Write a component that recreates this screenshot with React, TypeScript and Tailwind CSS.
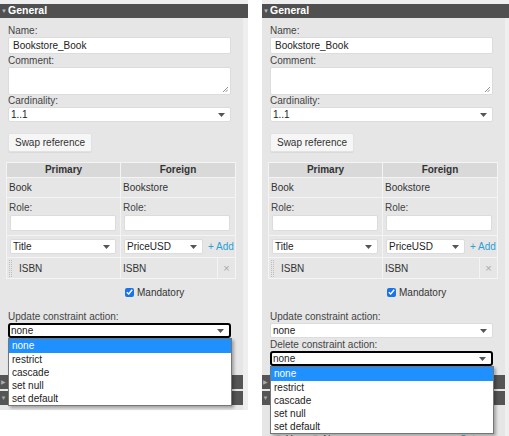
import clsx from 'clsx';

const OPTIONS = ['none', 'restrict', 'cascade', 'set null', 'set default'];

const Arrow = () => (
  <svg width="7" height="4" viewBox="0 0 7 4" className="shrink-0">
    <path d="M0 0h7L3.5 4z" fill="#555" />
  </svg>
);

const Select = ({ value, focused, className }: { value: string; focused?: boolean; className?: string }) => (
  <div
    className={clsx(
      'flex h-[15px] items-center justify-between bg-white pr-[5px]',
      focused ? 'rounded-[3px] border-2 border-black pl-[1px]' : 'rounded-[2px] border border-[#dcdcdc] pl-[2px]',
      className
    )}
  >
    <span className="leading-none text-[#222]">{value}</span>
    <Arrow />
  </div>
);

const Dropdown = () => (
  <div className="absolute left-0 top-full z-10 w-[224px] border border-[#767676] bg-white shadow-[2px_2px_3px_rgba(0,0,0,0.3)]">
    {OPTIONS.map((o, i) => (
      <div
        key={o}
        className={clsx(
          'pl-[3px]',
          i === 0 ? 'h-[14px] bg-[#1e90ff] leading-[14px] text-white' : 'h-[13px] leading-[13px] text-[#222]'
        )}
      >
        {o}
      </div>
    ))}
  </div>
);

const Label = ({ children, className }: { children: string; className?: string }) => (
  <div className={clsx('h-[12px] leading-[12px] text-[#444]', className)}>{children}</div>
);

const Bar = ({ open }: { open?: boolean }) => (
  <div className="flex h-[14px] items-center bg-[#555]">
    <span className="w-[7px] text-center text-[6px] text-[#aaa]">{open ? '▼' : '▶'}</span>
  </div>
);

const Panel = ({ open, tail }: { open: 'update' | 'delete'; tail?: boolean }) => (
  <div className="flex w-[248px] shrink-0 flex-col">
    <div className="h-[4px] bg-[#efefef]" />
    <div className="flex h-[14px] items-center bg-[#505050] text-[10.5px] font-bold text-white">
      <span className="w-[8px] text-center text-[6px] text-[#bbb]">▼</span>
      General
    </div>
    <div className="flex">
      <div className="w-[243px] bg-[#e6e6e6] pb-[5px]">
        <div className="px-[8px] pt-[7px]">
          <Label>Name:</Label>
          <div className="flex h-[17px] w-[223px] items-center rounded-[2px] border border-[#dcdcdc] bg-white pl-[4px] text-[#222]">
            Bookstore_Book
          </div>
          <Label className="mt-px">Comment:</Label>
          <div className="relative h-[28px] w-[223px] rounded-[2px] border border-[#dcdcdc] bg-white">
            <svg width="6" height="6" viewBox="0 0 6 6" className="absolute bottom-[2px] right-[2px]">
              <path d="M1 6L6 1M3.5 6L6 3.5" stroke="#777" strokeWidth="0.8" />
            </svg>
          </div>
          <Label>Cardinality:</Label>
          <Select value="1..1" className="w-[223px]" />

          <button className="mt-[11px] h-[19px] w-[84px] rounded-[2px] border border-[#e2e2e2] bg-[#f6f6f6] text-[10px] text-[#333] shadow-[0_1px_1px_rgba(0,0,0,0.06)]">
            Swap reference
          </button>

          <div className="-ml-[2px] mt-[10px] grid w-[230px] grid-cols-[113px_96px_17px] gap-px bg-[#f4f4f4] p-px text-[#333]">
            <div className="h-[14px] bg-[#d9d9d9] text-center font-bold leading-[14px]">Primary</div>
            <div className="col-span-2 h-[14px] bg-[#d9d9d9] text-center font-bold leading-[14px]">Foreign</div>

            <div className="flex h-[19px] items-center bg-[#e6e6e6] pl-[2px]">Book</div>
            <div className="col-span-2 flex h-[19px] items-center bg-[#e6e6e6] pl-[2px]">Bookstore</div>

            <div className="h-[37px] bg-[#e6e6e6] pl-[2px] pr-[4px] pt-[4px]">
              <Label>Role:</Label>
              <div className="ml-px mt-px h-[16px] rounded-[2px] border border-[#dcdcdc] bg-white" />
            </div>
            <div className="col-span-2 h-[37px] bg-[#e6e6e6] pl-[2px] pr-[5px] pt-[4px]">
              <Label>Role:</Label>
              <div className="ml-px mt-px h-[16px] rounded-[2px] border border-[#dcdcdc] bg-white" />
            </div>

            <div className="flex h-[21px] items-center bg-[#e6e6e6] pl-[3px] pr-[4px]">
              <Select value="Title" className="w-full" />
            </div>
            <div className="col-span-2 flex h-[21px] items-center bg-[#e6e6e6] pl-[3px]">
              <Select value="PriceUSD" className="w-[79px]" />
              <span className="ml-[5px] text-[#2a9fd6]">+ Add</span>
            </div>

            <div className="flex h-[20px] items-center bg-[#e6e6e6] pl-[2px]">
              <span className="flex h-[17px] gap-[1px]">
                <span className="h-full border-l border-dotted border-[#bdbdbd]" />
                <span className="h-full border-l border-dotted border-[#bdbdbd]" />
              </span>
              <span className="ml-[7px]">ISBN</span>
            </div>
            <div className="flex h-[20px] items-center bg-[#e6e6e6] pl-[2px]">ISBN</div>
            <div className="flex h-[20px] items-center justify-center bg-[#e6e6e6] text-[11px] text-[#aaa]">×</div>
          </div>

          <div className="mt-[7px] flex h-[12px] items-center pl-[117px] text-[#333]">
            <span className="flex h-[9px] w-[9px] items-center justify-center rounded-[2px] bg-[#1a73e8]">
              <svg width="7" height="6" viewBox="0 0 7 6">
                <path d="M0.8 3.2L2.7 5L6.2 0.8" stroke="white" strokeWidth="1.4" fill="none" />
              </svg>
            </span>
            <span className="ml-[3px]">Mandatory</span>
          </div>

          <Label className="mt-[13px]">Update constraint action:</Label>
          <div className="relative w-[223px]">
            <Select value="none" focused={open === 'update'} />
            {open === 'update' && <Dropdown />}
          </div>
          <Label className="mt-px">Delete constraint action:</Label>
          <div className="relative w-[223px]">
            <Select value="none" focused={open === 'delete'} />
            {open === 'delete' && <Dropdown />}
          </div>
        </div>

        <div className="mt-[9px] flex flex-col gap-[2px]">
          <Bar />
          <Bar open />
        </div>

        {tail && (
          <div className="mt-[27px] flex h-[14px] items-center px-[12px] text-[#555]">
            <span className="h-[9px] w-[9px] rounded-full border border-[#bbb] bg-[#f3f3f3]" />
            <span className="ml-[3px]">Yes</span>
            <span className="ml-[9px] h-[9px] w-[9px] rounded-full border border-[#bbb] bg-[#f3f3f3]" />
            <span className="ml-[3px]">No</span>
            <span className="ml-auto mr-[18px] text-[#2a9fd6]">Set</span>
          </div>
        )}
      </div>
      <div className="w-[5px] bg-[#efefef]" />
    </div>
  </div>
);

export default function App() {
  return (
    <div className="flex h-[436px] w-[509px] items-start gap-[14px] overflow-hidden bg-white font-['Liberation_Sans',Arial,sans-serif] text-[10px]">
      <Panel open="update" />
      <Panel open="delete" tail />
    </div>
  );
}
